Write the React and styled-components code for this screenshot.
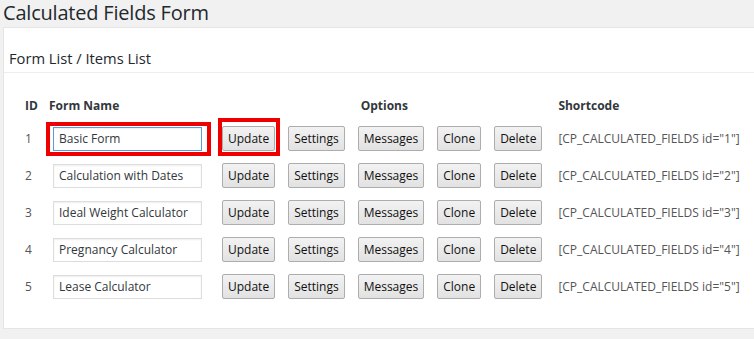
import React from 'react'
import styled, { createGlobalStyle } from 'styled-components'

const GlobalStyle = createGlobalStyle`
  body {
    margin: 0;
    background: #f1f1f1;
    font-family: "Open Sans", "Noto Sans", sans-serif;
    color: #444;
  }
`

const forms = [
  { id: 1, name: 'Basic Form', focused: true },
  { id: 2, name: 'Calculation with Dates' },
  { id: 3, name: 'Ideal Weight Calculator' },
  { id: 4, name: 'Pregnancy Calculator' },
  { id: 5, name: 'Lease Calculator' },
]

const options = ['Update', 'Settings', 'Messages', 'Clone', 'Delete']

const App = () => {
  return (
    <Page>
      <GlobalStyle />
      <Title>Calculated Fields Form</Title>
      <Panel>
        <PanelHeader>Form List / Items List</PanelHeader>
        <Table>
          <HeadCell>ID</HeadCell>
          <HeadCell>Form Name</HeadCell>
          <HeadCell />
          <HeadCell />
          <HeadCell $shift>Options</HeadCell>
          <HeadCell />
          <HeadCell />
          <HeadCell $last>Shortcode</HeadCell>
          {forms.map((f) => (
            <React.Fragment key={f.id}>
              <IdCell>{f.id}</IdCell>
              <Cell>
                <NameWrap $marked={f.focused}>
                  <NameInput $focused={f.focused} defaultValue={f.name} />
                </NameWrap>
              </Cell>
              {options.map((o) => (
                <Cell key={o}>
                  <ButtonWrap $marked={f.focused && o === 'Update'}>
                    <Button type='button'>{o}</Button>
                  </ButtonWrap>
                </Cell>
              ))}
              <Shortcode>[CP_CALCULATED_FIELDS id="{f.id}"]</Shortcode>
            </React.Fragment>
          ))}
        </Table>
      </Panel>
    </Page>
  )
}

export default App

const Page = styled.div`
  width: 754px;
  overflow-x: hidden;
  padding-bottom: 10px;
`

const Title = styled.h1`
  margin: 0;
  padding: 1px 0 3px 3px;
  line-height: 23px;
  font-size: 20px;
  font-weight: 400;
  color: #23282d;
  letter-spacing: -0.2px;
`

const Panel = styled.div`
  margin-left: 3px;
  width: 780px;
  height: 302px;
  background: #fff;
  border: 1px solid #e5e5e5;
  box-sizing: border-box;
`

const PanelHeader = styled.div`
  height: 45px;
  box-sizing: border-box;
  padding: 20px 0 0 5px;
  font-size: 14.7px;
  line-height: 20px;
  color: #23282d;
  border-bottom: 1px solid #eee;
`

const Table = styled.div`
  display: grid;
  grid-template-columns: 11px 160px auto auto auto auto auto 1fr;
  grid-template-rows: 30px repeat(5, 37px);
  column-gap: 13px;
  align-items: center;
  padding: 17px 0 0 21px;
  font-size: 12px;
`

const HeadCell = styled.div`
  font-weight: 700;
  color: #32373c;
  padding-left: ${(p) => (p.$shift ? '3px' : '0')};
  margin-left: ${(p) => (p.$last ? '3px' : '0')};
`

const Cell = styled.div`
  display: flex;
  align-items: center;
`

const IdCell = styled.div`
  color: #555;
`

const NameWrap = styled.div`
  padding: 1px 5px 1px 3px;
  margin-left: -3px;
  border: 4px solid ${(p) => (p.$marked ? '#ee0000' : 'transparent')};
`

const NameInput = styled.input`
  display: block;
  width: 149px;
  height: 24px;
  box-sizing: border-box;
  padding: 2px 5px;
  border: 1px solid ${(p) => (p.$focused ? '#5b9dd9' : '#ddd')};
  box-shadow: inset 0 1px 2px rgba(0, 0, 0, 0.07);
  font-family: inherit;
  font-size: 12px;
  color: #32373c;
  outline: none;
`

const ButtonWrap = styled.div`
  display: flex;
  padding: 4px 1px 1px 0;
  margin: -8px -5px -5px -4px;
  border: 4px solid ${(p) => (p.$marked ? '#ee0000' : 'transparent')};
`

const Button = styled.button`
  height: 25px;
  padding: 0 5px;
  border: 1px solid #adadad;
  border-radius: 2px;
  background: linear-gradient(#f2f2f2, #e2e2e2);
  font-family: inherit;
  font-size: 12px;
  color: #111;
  cursor: pointer;
`

const Shortcode = styled.div`
  margin-left: 3px;
  color: #555;
  white-space: nowrap;
`
